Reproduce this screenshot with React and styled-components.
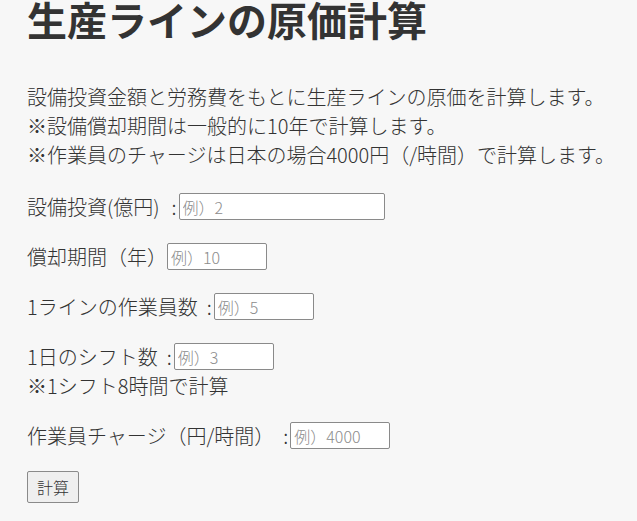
import React from "react";
import styled, { createGlobalStyle } from "styled-components";

const FONT = `"Noto Sans CJK JP", "Liberation Sans", sans-serif`;

const Global = createGlobalStyle`
  html, body { margin: 0; padding: 0; background: #f7f7f7; }
  body {
    font-family: ${FONT};
    color: #333;
  }
`;

const Page = styled.main`
  padding: 0 27px;
`;

const Title = styled.h1`
  margin: -5px 0 39px;
  font-size: 40px;
  line-height: 48px;
  font-weight: bold;
  color: #333;
  white-space: nowrap;
`;

const Intro = styled.p`
  margin: 0 0 23px;
  font-size: 20px;
  line-height: 29px;
  font-weight: 300;
  white-space: nowrap;
`;

const Field = styled.div`
  margin-bottom: 21px;
  font-size: 20px;
  line-height: 29px;
  font-weight: 300;
`;

const Row = styled.label`
  display: flex;
  align-items: center;
  height: 29px;
  white-space: pre;
`;

const Colon = styled.span`
  margin-left: ${(p) => p.$gap || 9}px;
  margin-right: 2px;
`;

const Note = styled.div``;

const Input = styled.input`
  box-sizing: border-box;
  width: ${(p) => p.$w || 100}px;
  height: 27px;
  padding: 0 3px;
  border: 1px solid #8a8a8a;
  border-radius: 2px;
  background: #fff;
  font-family: ${FONT};
  font-size: 16px;
  font-weight: 300;
  color: #333;
  &::placeholder { color: #8c8c8c; }
`;

const Button = styled.button`
  box-sizing: border-box;
  height: 32px;
  padding: 0 9px;
  border: 1px solid #8a8a8a;
  border-radius: 2px;
  background: #efefef;
  font-family: ${FONT};
  font-size: 16px;
  font-weight: 300;
  color: #333;
`;

export default function App() {
  return (
    <>
      <Global />
      <Page>
        <Title>生産ラインの原価計算</Title>
        <Intro>
          設備投資金額と労務費をもとに生産ラインの原価を計算します。
          <br />
          ※設備償却期間は一般的に10年で計算します。
          <br />
          ※作業員のチャージは日本の場合4000円（/時間）で計算します。
        </Intro>
        <Field>
          <Row>
            設備投資(億円)<Colon $gap={12}>:</Colon>
            <Input $w={206} placeholder="例）2" />
          </Row>
        </Field>
        <Field>
          <Row>
            償却期間（年）<Input placeholder="例）10" />
          </Row>
        </Field>
        <Field>
          <Row>
            1ラインの作業員数<Colon>:</Colon>
            <Input placeholder="例）5" />
          </Row>
        </Field>
        <Field>
          <Row>
            1日のシフト数<Colon>:</Colon>
            <Input placeholder="例）3" />
          </Row>
          <Note>※1シフト8時間で計算</Note>
        </Field>
        <Field>
          <Row>
            作業員チャージ（円/時間）<Colon>:</Colon>
            <Input placeholder="例）4000" />
          </Row>
        </Field>
        <Button>計算</Button>
      </Page>
    </>
  );
}
